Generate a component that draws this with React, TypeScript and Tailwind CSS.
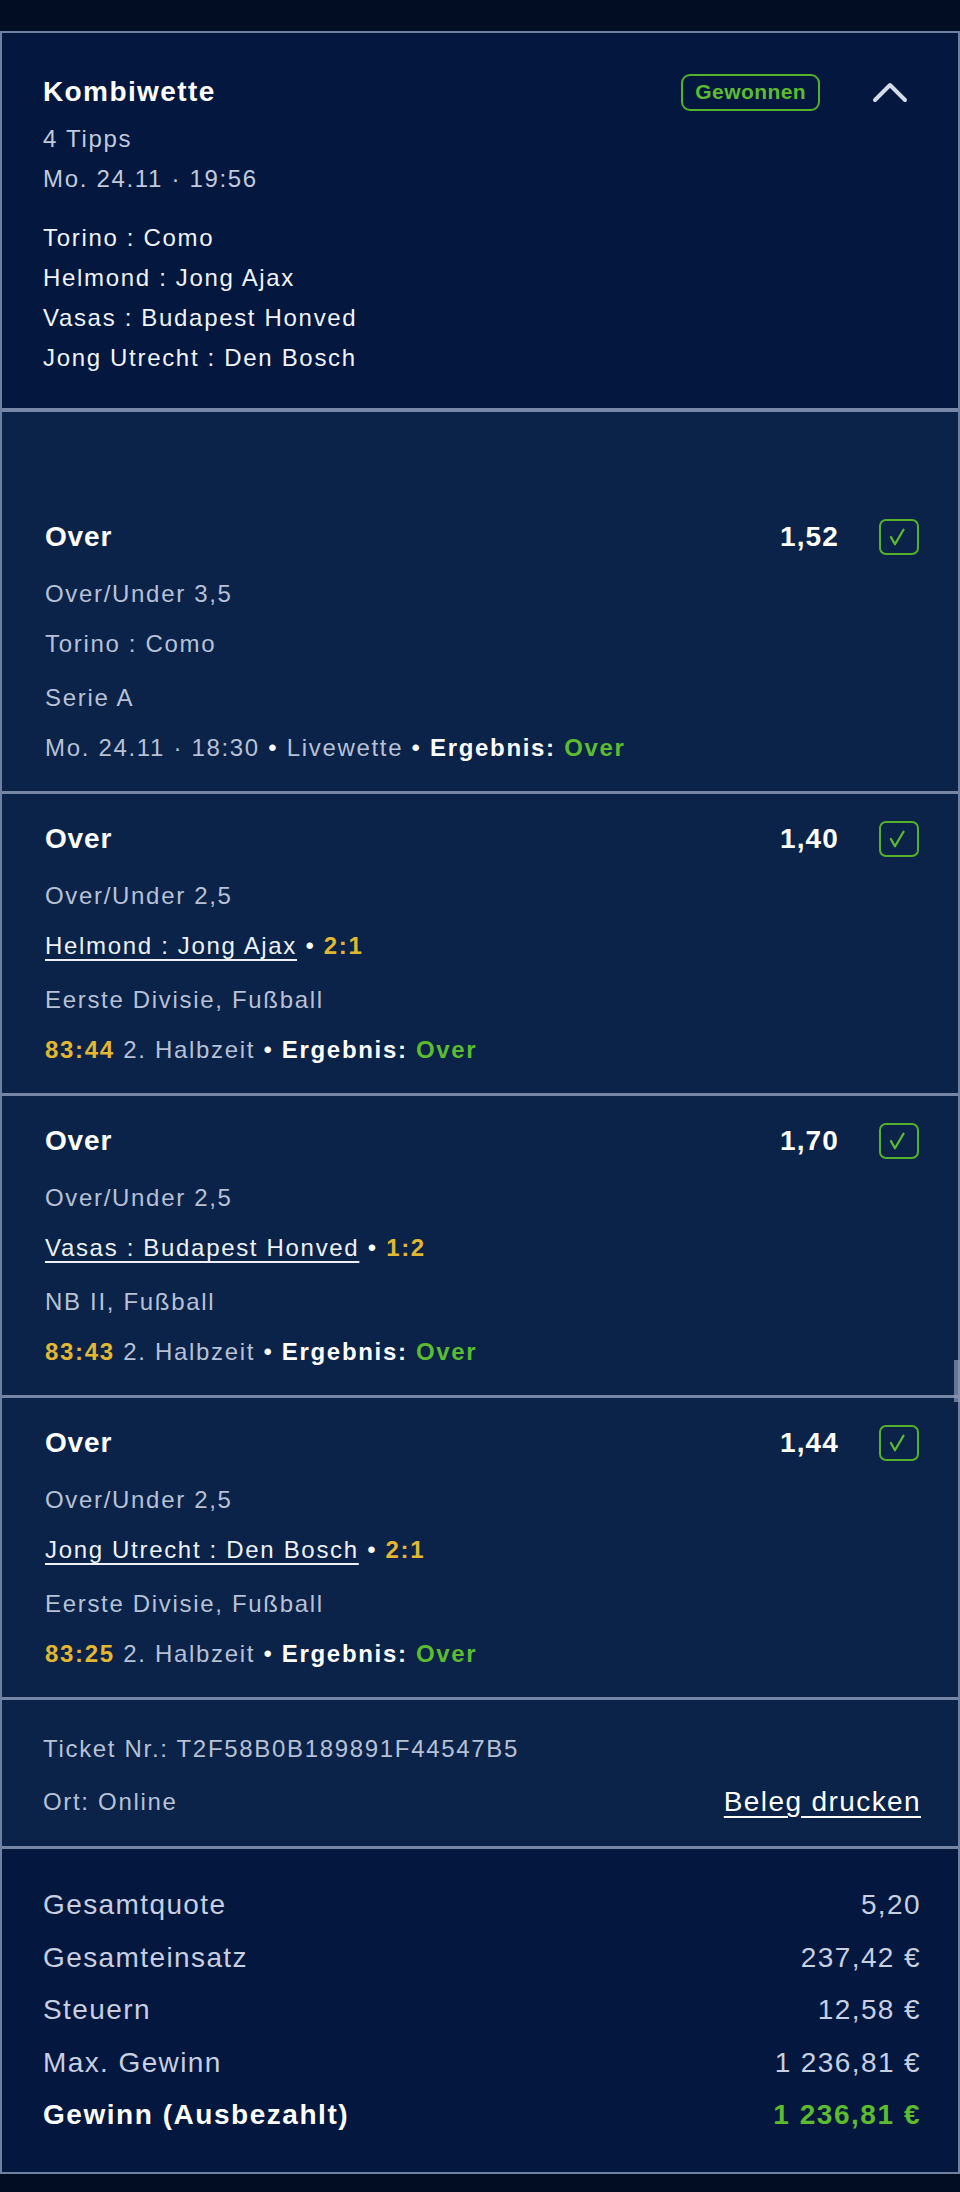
import React from 'react';

interface Bet {
  odds: string;
  market: string;
  match: string;
  score?: string;
  league: string;
  time?: string;
  info: string;
}

const bets: Bet[] = [
  {
    odds: '1,52',
    market: 'Over/Under 3,5',
    match: 'Torino : Como',
    league: 'Serie A',
    info: 'Mo. 24.11 · 18:30',
  },
  {
    odds: '1,40',
    market: 'Over/Under 2,5',
    match: 'Helmond : Jong Ajax',
    score: '2:1',
    league: 'Eerste Divisie, Fußball',
    time: '83:44',
    info: '2. Halbzeit',
  },
  {
    odds: '1,70',
    market: 'Over/Under 2,5',
    match: 'Vasas : Budapest Honved',
    score: '1:2',
    league: 'NB II, Fußball',
    time: '83:43',
    info: '2. Halbzeit',
  },
  {
    odds: '1,44',
    market: 'Over/Under 2,5',
    match: 'Jong Utrecht : Den Bosch',
    score: '2:1',
    league: 'Eerste Divisie, Fußball',
    time: '83:25',
    info: '2. Halbzeit',
  },
];

const summary = [
  { label: 'Gesamtquote', value: '5,20' },
  { label: 'Gesamteinsatz', value: '237,42 €' },
  { label: 'Steuern', value: '12,58 €' },
  { label: 'Max. Gewinn', value: '1 236,81 €' },
];

const CheckBox: React.FC = () => (
  <div className="w-[40px] h-[36px] rounded-[7px] border-2 border-[#55b02c] flex items-center justify-center">
    <svg width="40" height="36" viewBox="0 0 40 36" fill="none">
      <path d="M11 18 L15.5 26 L25 10" stroke="#5cbb2f" strokeWidth="2.5" strokeLinecap="round" strokeLinejoin="round" />
    </svg>
  </div>
);

const BetRow: React.FC<{ bet: Bet; first?: boolean }> = ({ bet, first }) => {
  const live = !!bet.time;
  return (
    <div
      className={`bg-[#0b2249] px-[43px] pr-[39px] pb-[18px] ${
        first ? 'pt-[105px] border-t-[4px] border-[#7787a8]' : 'pt-[25px] border-t-[3px] border-[#7485a6]'
      }`}
    >
      <div className="flex items-center h-[40px]">
        <div className="flex-1 text-[28px] font-bold text-white tracking-[0.03em]">Over</div>
        <div className="text-[28px] font-bold text-white mr-[40px] tracking-[0.04em]">{bet.odds}</div>
        <CheckBox />
      </div>
      <div className="mt-[12px] leading-[50px] text-[#b7c1d6]">{bet.market}</div>
      <div className="leading-[50px]">
        {live ? (
          <>
            <span className="text-[#eef2f8] underline decoration-2 underline-offset-[5px]">{bet.match}</span>
            <span className="text-white"> • </span>
            <span className="text-[#e2b731] font-bold">{bet.score}</span>
          </>
        ) : (
          <span className="text-[#b7c1d6]">{bet.match}</span>
        )}
      </div>
      <div className="mt-[4px] leading-[50px] text-[#b7c1d6]">{bet.league}</div>
      <div className="leading-[50px] text-[#b7c1d6]">
        {live && <span className="text-[#e2b731] font-bold">{bet.time} </span>}
        <span>{bet.info}</span>
        {!live && (
          <>
            <span className="text-white"> • </span>
            <span>Livewette</span>
          </>
        )}
        <span className="text-white"> • </span>
        <span className="text-white font-bold">Ergebnis: </span>
        <span className="text-[#5cbb2f] font-bold">Over</span>
      </div>
    </div>
  );
};

export default function App() {
  return (
    <div className="min-h-screen bg-[#020c22] font-['Liberation_Sans',Arial,sans-serif] text-[24px] tracking-[0.07em] relative">
      <div className="h-[31px]" />
      <div className="border-2 border-[#6f80a3]">
        {/* header */}
        <div className="bg-[#03173f] pt-[40px] pb-[30px] pl-[41px] pr-[37px]">
          <div className="flex items-center h-[38px]">
            <div className="flex-1 text-[28px] font-bold text-white tracking-[0.05em]">Kombiwette</div>
            <div className="h-[37px] px-[12px] rounded-[9px] border-2 border-[#55b02c] flex items-center text-[21px] font-bold text-[#5cbb2f] tracking-[0.02em]">
              Gewonnen
            </div>
            <svg className="ml-[52px] mr-[13px]" width="36" height="22" viewBox="0 0 36 22" fill="none">
              <path d="M3 19 L18 4 L33 19" stroke="#d3dbea" strokeWidth="4" strokeLinecap="round" strokeLinejoin="round" />
            </svg>
          </div>
          <div className="mt-[8px] leading-[40px] text-[#c1cadd]">
            <div>4 Tipps</div>
            <div>Mo. 24.11 · 19:56</div>
          </div>
          <div className="mt-[19px] leading-[40px] text-[#f1f4f9]">
            <div>Torino : Como</div>
            <div>Helmond : Jong Ajax</div>
            <div>Vasas : Budapest Honved</div>
            <div>Jong Utrecht : Den Bosch</div>
          </div>
        </div>

        {bets.map((bet, i) => (
          <BetRow key={bet.match} bet={bet} first={i === 0} />
        ))}

        {/* ticket */}
        <div className="bg-[#0b2249] border-t-[3px] border-[#7485a6] pt-[29px] pb-[24px] pl-[41px] pr-[37px]">
          <div className="leading-[40px] text-[#b7c1d6] tracking-[0.07em]">Ticket Nr.: T2F58B0B189891F44547B5</div>
          <div className="mt-[13px] flex items-center justify-between h-[40px]">
            <span className="text-[#b7c1d6]">Ort: Online</span>
            <span className="text-[28px] text-white underline decoration-2 underline-offset-[5px] tracking-[0.05em]">
              Beleg drucken
            </span>
          </div>
        </div>

        {/* summary */}
        <div className="bg-[#03173f] border-t-[3px] border-[#7485a6] pt-[30px] pb-[30px] pl-[41px] pr-[37px] text-[28px] tracking-[0.05em]">
          {summary.map((row) => (
            <div key={row.label} className="flex justify-between leading-[52.5px] text-[#c7cfe0]">
              <span>{row.label}</span>
              <span>{row.value}</span>
            </div>
          ))}
          <div className="flex justify-between leading-[52.5px] font-bold tracking-[0.055em]">
            <span className="text-white">Gewinn (Ausbezahlt)</span>
            <span className="text-[#5cbb2f]">1 236,81 €</span>
          </div>
        </div>
      </div>
      {/* scrollbar thumb */}
      <div className="absolute right-0 top-[1360px] w-[6px] h-[42px] bg-[#8c99b4] opacity-70" />
    </div>
  );
}
